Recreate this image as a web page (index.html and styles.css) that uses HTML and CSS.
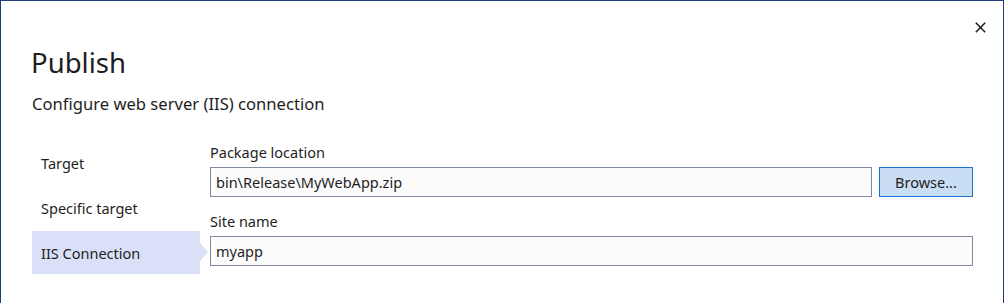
FILE: index.html
```html
<!DOCTYPE html>
<html>
<head>
<meta charset="utf-8">
<link rel="stylesheet" href="styles.css">
</head>
<body>
<div class="window">
  <div class="topbar">
    <button class="close" aria-label="Close">
      <svg width="11" height="11" viewBox="0 0 11 11"><path d="M0.8 0.8 L10.2 10.2 M10.2 0.8 L0.8 10.2" stroke="#1b1b1b" stroke-width="1.5" fill="none"/></svg>
    </button>
  </div>
  <h1 class="title">Publish</h1>
  <h2 class="subtitle">Configure web server (IIS) connection</h2>
  <div class="body">
    <nav class="nav">
      <div class="nav-item">Target</div>
      <div class="nav-item">Specific target</div>
      <div class="nav-item selected">IIS Connection</div>
    </nav>
    <div class="form">
      <label class="label">Package location</label>
      <div class="row">
        <div class="input grow">bin\Release\MyWebApp.zip</div>
        <button class="browse">Browse...</button>
      </div>
      <label class="label second">Site name</label>
      <div class="input">myapp</div>
    </div>
  </div>
</div>
</body>
</html>
```
FILE: styles.css
```css
html, body { margin: 0; padding: 0; background: #fff; }
body { font-family: "Segoe UI", "Noto Sans", "Open Sans", sans-serif; color: #1e1e1e; }
.window {
  width: 1002px; height: 303px;
  border: 1px solid #1f3f7a; border-bottom: none;
  box-sizing: content-box;
}
.topbar { height: 14px; display: flex; justify-content: flex-end; padding-right: 15px; }
.close { margin-top: 19px; width: 15px; height: 15px; padding: 2px; border: none; background: none; display: flex; }
.title { margin: 30px 0 0 30px; font-size: 27.5px; font-weight: 400; line-height: 36px; }
.subtitle { margin: 12px 0 0 31px; font-size: 16.6px; font-weight: 400; line-height: 22px; }
.body { display: flex; margin-top: 26px; margin-left: 31px; }
.nav { width: 168px; display: flex; flex-direction: column; gap: 1px; }
.nav-item { height: 44px; line-height: 44px; padding-left: 9px; font-size: 14.5px; position: relative; }
.nav-item.selected { background: #d9e0f7; height: 43px; }
.nav-item.selected::after {
  content: ""; position: absolute; right: -8px; top: 12px;
  border-left: 8px solid #d9e0f7; border-top: 9px solid transparent; border-bottom: 9px solid transparent;
}
.form { margin-left: 10px; width: 763px; display: flex; flex-direction: column; }
.label { font-size: 14.5px; line-height: 20px; margin-top: 1px; padding-left: 0; }
.label.second { margin-top: 14px; }
.row { display: flex; gap: 7px; margin-top: 5px; }
.input {
  height: 28px; line-height: 28px; border: 1px solid #7f8b9c; background: #fbfbfb;
  padding-left: 5px; font-size: 14.5px; margin-top: 5px;
}
.row .input { margin-top: 0; }
.grow { flex: 1; }
.browse {
  width: 94px; height: 30px; border: 1px solid #1a75cf; background: #c9ddf4;
  font-family: inherit; font-size: 14.5px; color: #1e1e1e; padding: 0;
}
```
